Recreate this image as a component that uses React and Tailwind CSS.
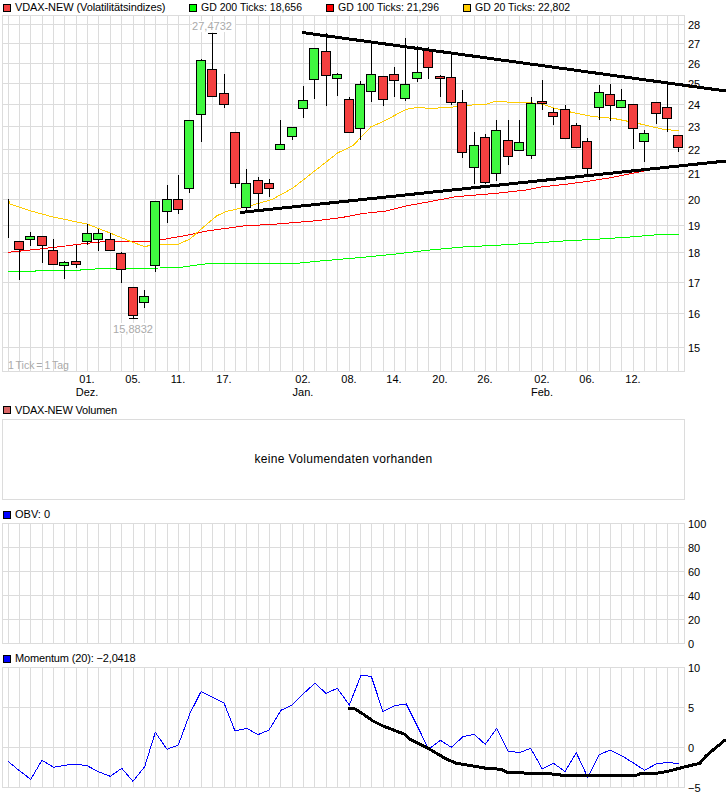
const colX = (i) => Math.round(8 + 11.37 * i - 0.5) + 0.5;
const cols = Array.from({ length: 60 }, (_, i) => colX(i));
const snap = (v) => Math.round(v) + 0.5;

// [wick top, body top, body bottom, wick bottom, green?]
const candles = [
  [198, 236.7, 236.7, 236.7, 0],
  [241.3, 241.3, 248.7, 278.7, 0],
  [231, 236.3, 239.3, 245, 1],
  [236.3, 236.3, 245.3, 261.7, 0],
  [237.7, 250.3, 264.3, 264.3, 0],
  [260.3, 262.3, 265.3, 277.7, 1],
  [244, 261.3, 264.3, 266.7, 0],
  [223, 233.3, 241.3, 244.3, 1],
  [228.3, 233.3, 239.3, 249.7, 1],
  [232.3, 239.3, 250.3, 250.3, 0],
  [251.3, 253.3, 269.3, 282.3, 0],
  [286.3, 287.3, 315.3, 318.3, 0],
  [289, 295.7, 302.3, 306.7, 1],
  [201.3, 201.3, 265.3, 270.7, 1],
  [184, 198.7, 211.3, 221.7, 1],
  [174, 199.3, 209.3, 212.7, 0],
  [120.3, 120.3, 188.3, 191.7, 1],
  [58.3, 60.3, 113.7, 140.7, 1],
  [33.3, 69.3, 95.7, 96.3, 0],
  [73, 93.3, 103.7, 106.7, 0],
  [131.3, 132.3, 183.3, 186.7, 0],
  [168, 183.3, 207.3, 211, 1],
  [176, 180.3, 192.7, 209.3, 0],
  [178, 183.3, 188.3, 196, 0],
  [119, 144.3, 149.3, 149.3, 1],
  [126, 127.3, 136.3, 138.7, 1],
  [85, 100.3, 108.3, 116.7, 1],
  [48.3, 48.3, 79.3, 97.7, 1],
  [32, 51.3, 75.3, 104.7, 0],
  [72, 74.3, 78.3, 94.7, 1],
  [96, 99.3, 132.3, 132.3, 0],
  [80, 84.3, 128.3, 139, 1],
  [41.7, 74.3, 91.3, 100.7, 1],
  [75, 76.3, 99.3, 104.7, 0],
  [66, 74.3, 80.3, 96, 0],
  [37.3, 84.3, 98.3, 99.7, 1],
  [45.3, 72.3, 77.7, 81, 1],
  [46.3, 49.3, 67.3, 77.7, 0],
  [74, 76.3, 78.3, 96, 0],
  [53.3, 77.3, 102.3, 103.7, 0],
  [89, 102.3, 152.3, 156.7, 0],
  [131, 145.3, 167.3, 183.3, 1],
  [133.3, 137.3, 181.7, 182.7, 0],
  [119, 130.3, 173.3, 180, 1],
  [119, 140.3, 156.3, 163.7, 0],
  [119, 142.3, 150.3, 150.3, 1],
  [96, 103.3, 155.3, 157.7, 1],
  [79, 101.3, 103.3, 108.7, 0],
  [106.7, 112.3, 116.3, 123.7, 0],
  [104.3, 109.3, 138.3, 138.3, 0],
  [121.7, 125.3, 147.3, 147.3, 0],
  [137.3, 141.3, 168.3, 174.3, 0],
  [84, 92.3, 107.3, 119, 1],
  [83.3, 94.3, 105.3, 120, 0],
  [88, 100.3, 107.3, 107.3, 1],
  [103.3, 104.3, 128.3, 148, 0],
  [129.3, 133.3, 141.3, 160.7, 1],
  [102.3, 102.3, 113.3, 123.3, 0],
  [83, 107.3, 118.3, 130.7, 0],
  [135.3, 135.3, 147.3, 150.7, 0],
];

const gd20 = "8,199 10,204 30,210.7 53,217 87,224 110,233 132,242 145,246.7 155,244 178,244.3 190,239 200,230 217,215.7 227,211.3 247,206.7 272,199.5 293,188 315,170.7 338,152.7 353,145.7 362,136 371,126.7 383,121.7 406,109.3 416,107.7 433,108.3 451,107.3 466,105.3 486,104.3 496,101 510,102.3 530,102.7 543,104.3 555,108.3 576,113.3 590,116 600,117.3 613,118.3 630,121.7 645,125 663,129.3 679,130.7";
const gd100 = "8,252.3 37,249.3 60,246.7 87,243.3 110,241 150,241.3 160,240 190,234.7 207,231 243,226 277,224 317,220.7 343,217.3 363,213.5 386,211 406,206 433,201 456,196.7 496,193.3 526,190 543,186.7 566,184.3 590,181 613,177.3 640,171.7 655,169";
const gd200 = "8,271.3 35,271.3 37,270.3 80,270.3 82,269.3 127,268.3 160,268 183,267 207,263.7 297,263.3 320,261 363,257.3 396,254 430,250 463,247 496,245.3 530,243.3 563,241 596,239.3 630,237 663,234.3 679,234.3";
const momentum = "8,761.3 19.4,770.7 30.7,779.3 42,760.3 53.7,767.3 65,765.3 76.3,764 87.7,766 99,772 110.3,776.3 121.7,768.3 133,781.3 144.7,766.7 155.3,732.3 167,749.3 178.3,745 190,713.3 201,691.7 212,697 224,703 235,731 246.7,728.3 258,734.7 269,730 281,710.3 292,705 303.3,693.7 315,683.3 326,693.3 337.3,688.3 349.3,705 361,675.3 371.3,676.3 383,711.7 394.7,705.7 406.3,704 417.3,726 428.7,749.3 440.3,740.3 451.3,747.3 463,736.7 474,734.3 485.3,744.3 496.7,728.3 508,751 519.3,752.7 530.7,748.3 542.3,769 553.7,763.3 565,771.7 576.3,752.7 587.7,777.3 599,754.7 610.3,750 621.7,755.7 633,762.7 644.7,770.3 656,764 667.3,762.3 678.7,763.7";
const momentumAvg = "348.3,708.3 355,709 363,714 373,721 383,726 404.7,734.3 409.7,739.3 426.3,747.3 446.3,759 456.3,763.3 473,766 486.3,768.3 501.3,769.3 506.3,772 529.7,773.3 549.7,773.7 563,775.3 636.3,775.3 641.3,773.3 656.3,773.3 666.3,771.7 683,767.3 699.7,763.3 706.3,755.7 713,750 726,739.3";

const priceTicks = [
  [28, 24], [27, 43], [26, 63], [25, 83], [24, 104], [23, 126], [22, 149],
  [21, 173], [20, 199], [19, 225], [18, 252], [17, 282], [16, 313], [15, 347],
];
const dates = [
  ["01.", 87, "Dez."], ["05.", 133], ["11.", 178], ["17.", 224], ["02.", 303, "Jan."],
  ["08.", 349], ["14.", 394], ["20.", 440], ["26.", 485], ["02.", 542, "Feb."],
  ["06.", 587], ["12.", 633],
];

function Swatch({ color }) {
  return <span className={`h-2 w-2 shrink-0 border border-black ${color}`} />;
}

function Legend({ color, children, className }) {
  return (
    <div className={`flex items-center gap-[4px] ${className}`}>
      <Swatch color={color} />
      <span>{children}</span>
    </div>
  );
}

function Grid({ top, bottom, rows }) {
  return (
    <g stroke="#dcdcdc" strokeWidth="1" shapeRendering="crispEdges">
      {cols.map((x) => (
        <line key={x} x1={x} x2={x} y1={top} y2={bottom} />
      ))}
      {rows.map((y) => (
        <line key={y} x1="2" x2="685" y1={snap(y)} y2={snap(y)} />
      ))}
      <line x1="2.5" x2="2.5" y1={top} y2={bottom} />
      <line x1="684.5" x2="684.5" y1={top} y2={bottom} />
    </g>
  );
}

function AxisLabels({ ticks }) {
  return ticks.map(([label, y]) => (
    <text key={label} x="688" y={y + 5} fill="#000">
      {label}
    </text>
  ));
}

function Candle({ data, i }) {
  const [hi, top, bottom, lo, up] = data;
  const x = colX(i);
  return (
    <g shapeRendering="crispEdges">
      <line x1={x} x2={x} y1={snap(hi)} y2={snap(lo)} stroke="#000" />
      <rect
        x={x - 5}
        y={snap(top)}
        width="9"
        height={Math.round(bottom) - Math.round(top)}
        fill={up ? "#40f840" : "#f44040"}
        stroke="#000"
      />
    </g>
  );
}

function PriceChart() {
  return (
    <svg viewBox="0 15 726 388" className="block h-[388px] w-[726px] text-[11px]">
      <Grid top={15} bottom={372} rows={[15, ...priceTicks.map((t) => t[1]), 371]} />
      <g shapeRendering="crispEdges" fill="none">
        <polyline points={gd200} stroke="#00ff00" />
        <polyline points={gd100} stroke="#ff0000" />
        <polyline points={gd20} stroke="#ffcc00" />
      </g>
      {candles.map((c, i) => (
        <Candle key={i} data={c} i={i} />
      ))}
      <g stroke="#000" shapeRendering="crispEdges">
        <line x1={colX(11) - 5} x2={colX(11) + 4} y1="318.5" y2="318.5" />
        <line x1={colX(18) - 5} x2={colX(18) + 4} y1="33.5" y2="33.5" />
      </g>
      <g stroke="#000" strokeWidth="3" shapeRendering="crispEdges">
        <line x1="302" y1="32.5" x2="726" y2="91" />
        <line x1="240" y1="212.5" x2="726" y2="161" />
      </g>
      <rect x="192" y="21" width="43" height="11" fill="#fff" />
      <text x="212" y="30" textAnchor="middle" fill="#aaa">27,4732</text>
      <rect x="111" y="323" width="44" height="11" fill="#fff" />
      <text x="133" y="333" textAnchor="middle" fill="#aaa">15,8832</text>
      <text x="8" y="369" fill="#aaa" className="text-[10.5px] [word-spacing:-1px]">1 Tick = 1 Tag</text>
      <AxisLabels ticks={priceTicks} />
      {dates.map(([day, x, month]) => (
        <g key={x} textAnchor="middle" fill="#000">
          <text x={x} y="383">{day}</text>
          {month && <text x={x} y="396">{month}</text>}
        </g>
      ))}
    </svg>
  );
}

function ObvChart() {
  const rows = [
    [100, 523], [80, 547], [60, 571], [40, 595], [20, 619], [0, 643],
  ];
  return (
    <svg viewBox="0 523 726 127" className="block h-[127px] w-[726px] overflow-visible text-[11px]">
      <Grid top={523} bottom={644} rows={rows.map((r) => r[1])} />
      <AxisLabels ticks={rows} />
    </svg>
  );
}

function MomentumChart() {
  const rows = [
    [10, 667], ["5", 707], ["0", 747], ["−5", 787],
  ];
  return (
    <svg viewBox="0 667 726 129" className="block h-[129px] w-[726px] overflow-visible text-[11px]">
      <Grid top={667} bottom={788} rows={rows.map((r) => r[1])} />
      <polyline points={momentum} fill="none" stroke="#0000ff" shapeRendering="crispEdges" />
      <polyline points={momentumAvg} fill="none" stroke="#000" strokeWidth="3" shapeRendering="crispEdges" />
      <AxisLabels ticks={rows} />
    </svg>
  );
}

export default function App() {
  return (
    <div className="h-[796px] w-[726px] overflow-hidden bg-white font-['Liberation_Sans',Arial,sans-serif] text-[11px] text-black">
      <div className="flex h-[15px] items-center pl-[3px]">
        <Legend color="bg-[#f44040]" className="w-[186px] tracking-[-0.1px]">VDAX-NEW (Volatilitätsindizes)</Legend>
        <Legend color="bg-[#00ff00]" className="w-[137px] text-[10.5px]">GD 200 Ticks: 18,656</Legend>
        <Legend color="bg-[#ff0000]" className="w-[137px] text-[10.5px]">GD 100 Ticks: 21,296</Legend>
        <Legend color="bg-[#ffcc00]" className="text-[10.5px]">GD 20 Ticks: 22,802</Legend>
      </div>
      <PriceChart />

      <div className="flex h-[16px] items-center pb-[2px] pl-[3px]">
        <Legend color="bg-[#d96666]" className="tracking-[-0.2px]">VDAX-NEW Volumen</Legend>
      </div>
      <div className="ml-[2px] flex h-[81px] w-[683px] items-center justify-center border border-[#dcdcdc] pb-[1px] text-[12px] tracking-[0.33px]">
        keine Volumendaten vorhanden
      </div>

      <div className="flex h-[23px] items-center pl-[3px] pt-[6px]">
        <Legend color="bg-[#0000ff]">OBV: 0</Legend>
      </div>
      <ObvChart />

      <div className="flex h-[17px] items-center pl-[3px]">
        <Legend color="bg-[#0000ff]" className="tracking-[-0.15px]">Momentum (20): −2,0418</Legend>
      </div>
      <MomentumChart />
    </div>
  );
}
